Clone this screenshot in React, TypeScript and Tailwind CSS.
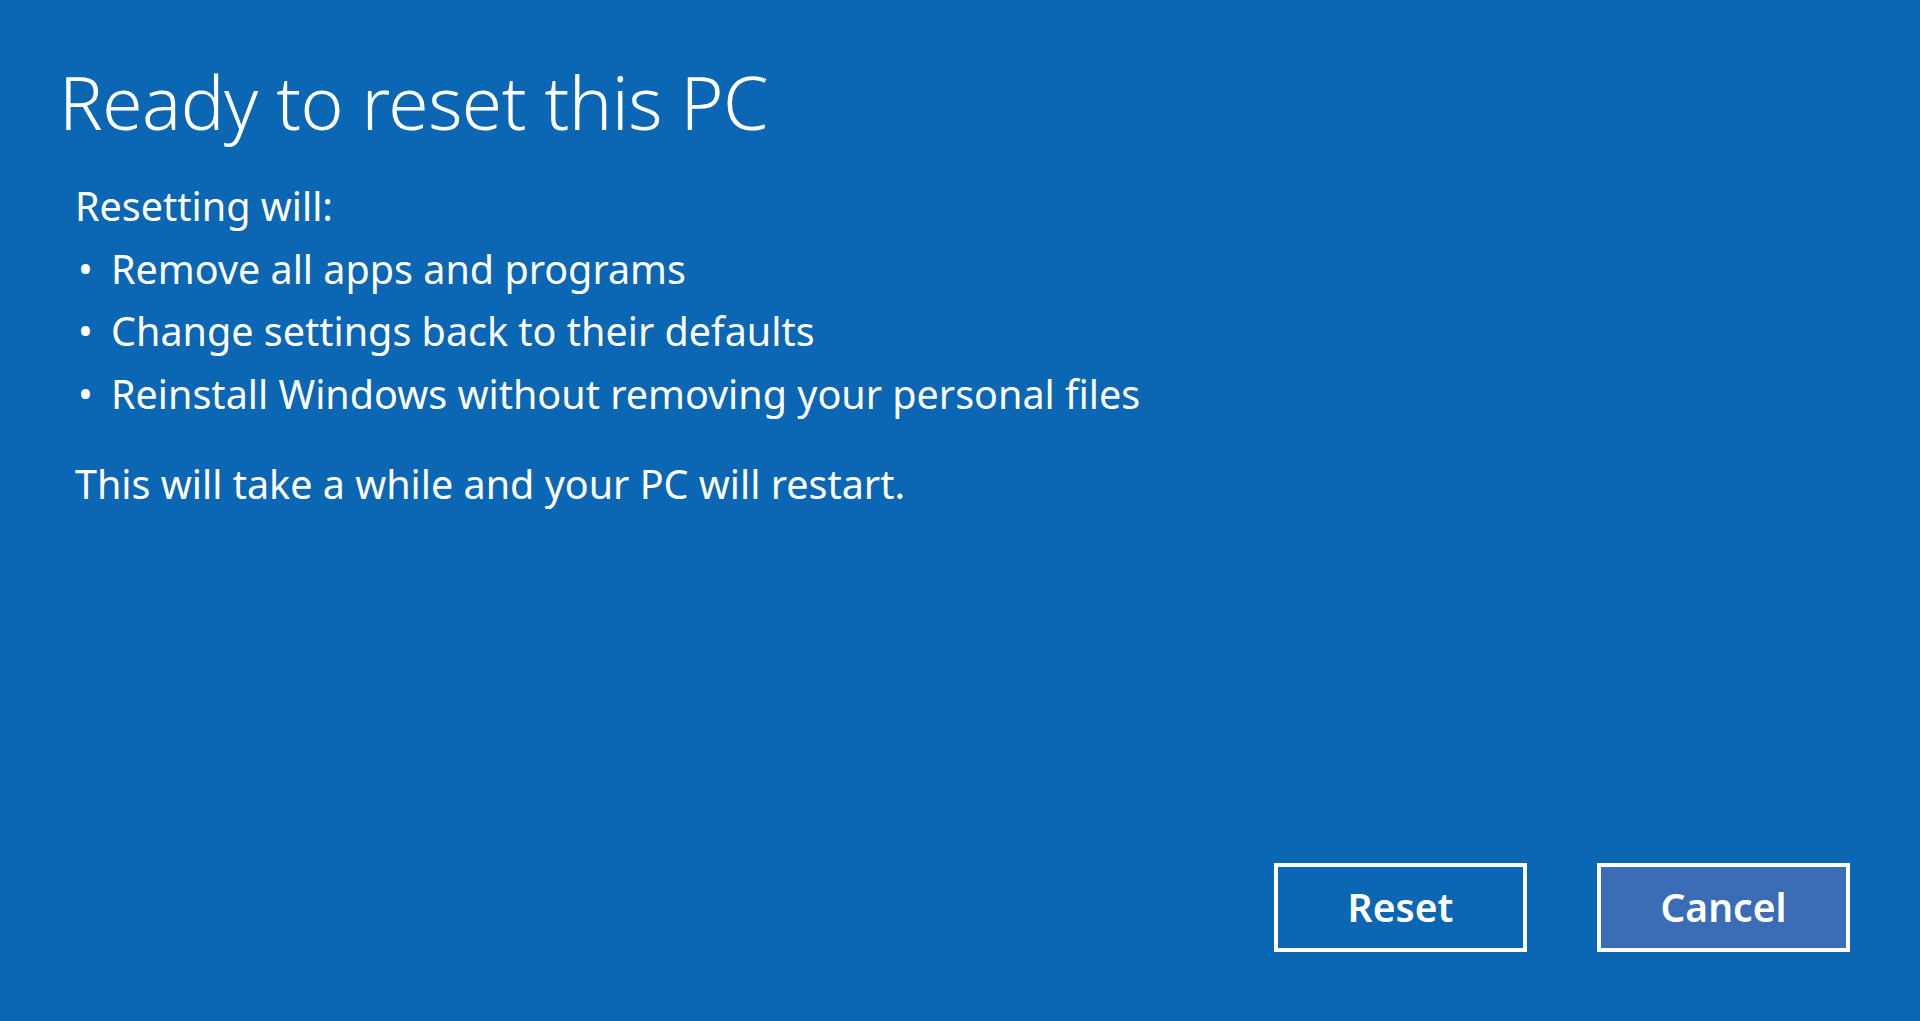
import React from 'react';

const changes = [
  'Remove all apps and programs',
  'Change settings back to their defaults',
  'Reinstall Windows without removing your personal files',
];

export default function App() {
  return (
    <div
      className="w-full h-[1021px] bg-[#0b66b3] text-white flex flex-col justify-between overflow-hidden"
      style={{ fontFamily: '"Noto Sans", "Open Sans", sans-serif' }}
    >
      <div className="pl-[59px] pt-[52px]">
        <h1 className="text-[73px] font-light leading-[100px] tracking-[-0.5px]">Ready to reset this PC</h1>

        <div className="pl-[16px] mt-[23px] text-[39.5px] leading-[62.5px]">
          <p>Resetting will:</p>
          <ul>
            {changes.map((item) => (
              <li key={item} className="flex">
                <span className="w-[36px] pl-[3px]">•</span>
                <span>{item}</span>
              </li>
            ))}
          </ul>
          <p className="mt-[28px]">This will take a while and your PC will restart.</p>
        </div>
      </div>

      {/* Action buttons */}
      <div className="flex justify-end gap-[70px] pr-[70px] pb-[69px]">
        <button className="w-[253px] h-[89px] border-[4px] border-white text-[39px] font-semibold">
          Reset
        </button>
        <button className="w-[253px] h-[89px] border-[4px] border-white bg-[#3a6db5] text-[39px] font-semibold">
          Cancel
        </button>
      </div>
    </div>
  );
}
